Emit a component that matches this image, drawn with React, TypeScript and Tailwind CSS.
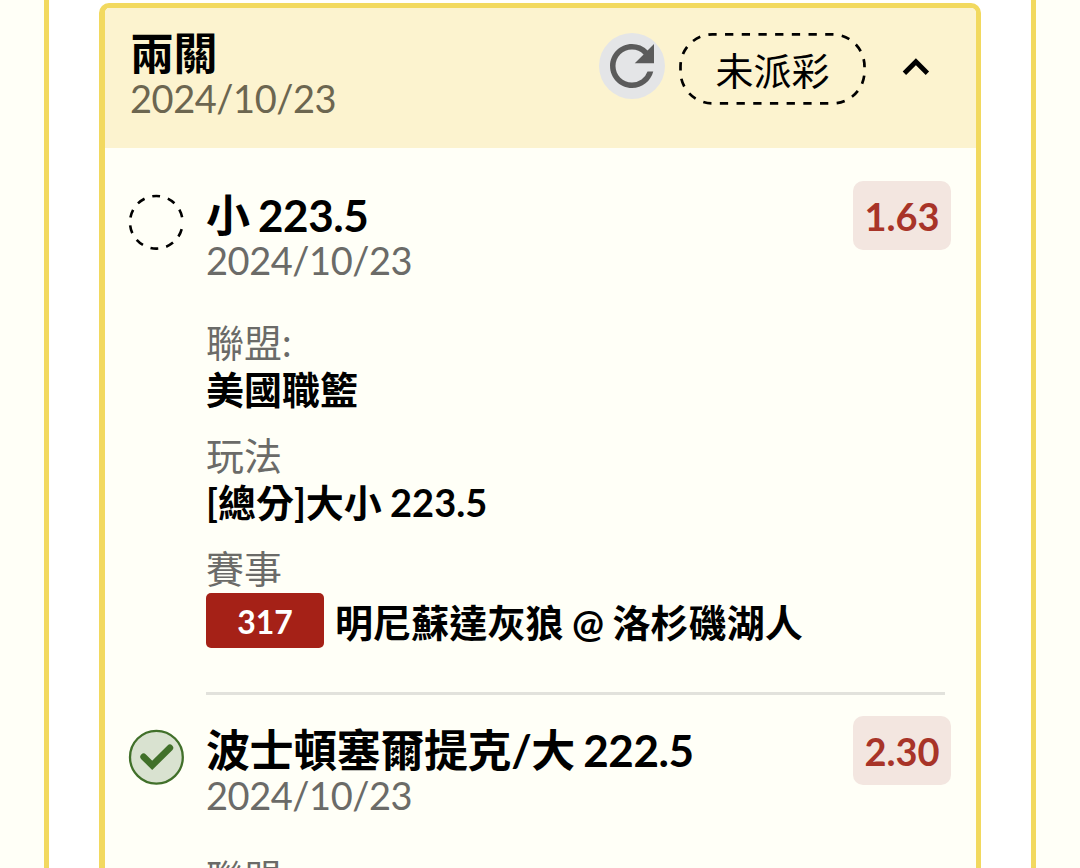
import type { ReactNode } from "react";
import { MdRefresh } from "react-icons/md";

type Match = {
  number: string;
  teams: string;
};

type Leg = {
  id: string;
  title: string;
  date: string;
  odds: string;
  status: "pending" | "won";
  league?: string;
  play?: string;
  match?: Match;
};

const legs: Leg[] = [
  {
    id: "under",
    title: "小 223.5",
    date: "2024/10/23",
    odds: "1.63",
    status: "pending",
    league: "美國職籃",
    play: "[總分]大小 223.5",
    match: { number: "317", teams: "明尼蘇達灰狼 @ 洛杉磯湖人" },
  },
  {
    id: "celtics-over",
    title: "波士頓塞爾提克/大 222.5",
    date: "2024/10/23",
    odds: "2.30",
    status: "won",
  },
];

function ChevronUpIcon() {
  return (
    <svg viewBox="0 0 52 52" className="h-[52px] w-[52px]" aria-hidden>
      <path d="M14.4 32.2 25.9 20.7 37.4 32.2" fill="none" stroke="#000" strokeWidth="4.8" />
    </svg>
  );
}

function PendingIcon() {
  return (
    <svg viewBox="0 0 56 56" className="h-14 w-14" aria-hidden>
      <circle cx="28.3" cy="28.3" r="26.3" fill="none" stroke="#000" strokeWidth="2.6" strokeDasharray="8 8" strokeDashoffset="-7" />
    </svg>
  );
}

function WonIcon() {
  return (
    <svg viewBox="0 0 56 56" className="h-14 w-14" aria-hidden>
      <circle cx="28.4" cy="28.2" r="26.4" fill="#d9e2d0" stroke="#41702a" strokeWidth="2.3" />
      <path d="M15.6 27.8 24.2 36.4 41.9 18.8" fill="none" stroke="#41702a" strokeWidth="6.6" strokeLinecap="round" />
    </svg>
  );
}

function StatusPill({ children }: { children: ReactNode }) {
  return (
    <div className="relative flex h-[72px] w-[187px] items-center justify-center">
      <svg viewBox="0 0 187 72" className="absolute inset-0 h-full w-full" aria-hidden>
        <rect x="1.5" y="1.4" width="184" height="69" rx="32" fill="none" stroke="#000" strokeWidth="2.7" pathLength="451" strokeDasharray="8.3 8.4037" strokeDashoffset="4.15" />
      </svg>
      <span className="relative pt-0.5 text-[38px] leading-[46px]">{children}</span>
    </div>
  );
}

function Field({ label, children }: { label: string; children?: ReactNode }) {
  return (
    <div className="text-[38px] leading-[46px]">
      <p className="text-[#6b6b68]">{label}</p>
      {children}
    </div>
  );
}

function LegRow({ leg }: { leg: Leg }) {
  return (
    <article className="flex items-start pl-[23px]">
      <div className="mt-[13px] w-[78px] shrink-0">{leg.status === "won" ? <WonIcon /> : <PendingIcon />}</div>

      <div className="min-w-0 flex-1">
        <div className="flex items-start justify-between pr-[25px]">
          <header className="pt-[11px]">
            <h3 className="text-[44px] leading-[46px] font-bold tracking-[-0.4px] [word-spacing:-2px]">{leg.title}</h3>
            <p className="text-[38px] leading-[44px] tracking-[-0.45px] text-[#6b6b68]">{leg.date}</p>
          </header>
          <span className="flex h-[69px] w-[98px] items-center justify-center rounded-[10px] bg-[#f3e6e0] pt-px text-[38px] font-bold text-[#a83428]">
            {leg.odds}
          </span>
        </div>

        <div className="mt-[37px] flex flex-col gap-5">
          <Field label="聯盟:">{leg.league ? <p className="pt-px font-bold">{leg.league}</p> : null}</Field>
          {leg.play ? (
            <Field label="玩法">
              <p className="pt-px font-bold [word-spacing:-1px]">{leg.play}</p>
            </Field>
          ) : null}
          {leg.match ? (
            <Field label="賽事">
              <div className="mt-0.5 flex items-center gap-[11px]">
                <span className="flex h-[55px] w-[118px] items-center justify-center rounded-[5px] bg-[#a52117] pt-0.5 text-[32px] font-bold text-white">
                  {leg.match.number}
                </span>
                <span className="pt-[3px] font-bold tracking-[0.1px] [word-spacing:-1px]">{leg.match.teams}</span>
              </div>
            </Field>
          ) : null}
        </div>

        <hr className="mt-11 mr-[31px] border-t-[3px] border-[#e2e2dc]" />
      </div>
    </article>
  );
}

export default function App() {
  return (
    <main className="h-[868px] overflow-hidden bg-[#fffff7] px-11 font-[Lato,'Noto_Sans_CJK_TC',sans-serif] text-black">
      <div className="h-full border-x-[5px] border-[#f2d95f] bg-white px-[50px] pt-[3px]">
        <section className="overflow-hidden rounded-t-[10px] border-[5px] border-l-[6px] border-[#f2d95f] bg-[#fffff7]">
          <header className="flex h-[140px] items-start justify-between bg-[#fcf3cf] pr-[34px] pl-[25px]">
            <div className="pt-[22px]">
              <h2 className="text-[44px] leading-[46px] font-bold tracking-[-0.4px]">兩關</h2>
              <p className="text-[38px] leading-[44px] tracking-[-0.45px] text-[#6c6650]">2024/10/23</p>
            </div>
            <div className="flex items-center pt-[25px]">
              <button type="button" aria-label="重新整理" className="mr-[14px] mb-[6px] rounded-full bg-[#e4e5e7] text-[#5b5b5b]">
                <MdRefresh size={66} />
              </button>
              <StatusPill>未派彩</StatusPill>
              <button type="button" aria-label="收合" className="mb-[5px] ml-6">
                <ChevronUpIcon />
              </button>
            </div>
          </header>

          <div className="flex flex-col gap-[21px] pt-[33px]">
            {legs.map((leg) => (
              <LegRow key={leg.id} leg={leg} />
            ))}
          </div>
        </section>
      </div>
    </main>
  );
}
